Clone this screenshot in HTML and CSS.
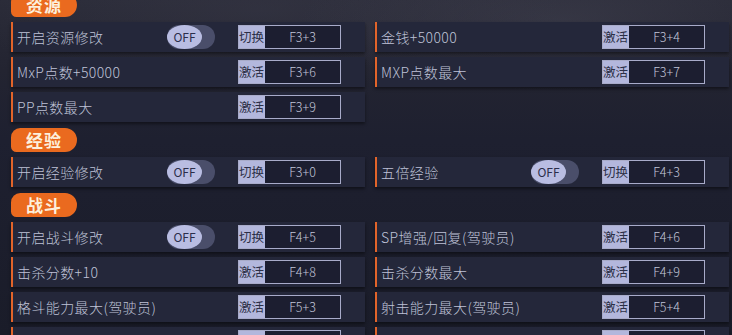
FILE: index.html
```html
<!DOCTYPE html>
<html lang="zh">
<head>
<meta charset="utf-8">
<link rel="stylesheet" href="styles.css">
</head>
<body>
<div class="page">
  <section class="section">
    <div class="tag">资源</div>
    <div class="grid">
      <div class="row"><span class="name">开启资源修改</span><span class="toggle"><span class="knob">OFF</span></span><span class="key"><span class="kl">切换</span><span class="kv">F3+3</span></span></div>
      <div class="row"><span class="name">金钱+50000</span><span class="key"><span class="kl">激活</span><span class="kv">F3+4</span></span></div>
      <div class="row"><span class="name">MxP点数+50000</span><span class="key"><span class="kl">激活</span><span class="kv">F3+6</span></span></div>
      <div class="row"><span class="name">MXP点数最大</span><span class="key"><span class="kl">激活</span><span class="kv">F3+7</span></span></div>
      <div class="row"><span class="name">PP点数最大</span><span class="key"><span class="kl">激活</span><span class="kv">F3+9</span></span></div>
    </div>
  </section>
  <section class="section">
    <div class="tag">经验</div>
    <div class="grid">
      <div class="row"><span class="name">开启经验修改</span><span class="toggle"><span class="knob">OFF</span></span><span class="key"><span class="kl">切换</span><span class="kv">F3+0</span></span></div>
      <div class="row"><span class="name">五倍经验</span><span class="toggle"><span class="knob">OFF</span></span><span class="key"><span class="kl">切换</span><span class="kv">F4+3</span></span></div>
    </div>
  </section>
  <section class="section">
    <div class="tag">战斗</div>
    <div class="grid">
      <div class="row"><span class="name">开启战斗修改</span><span class="toggle"><span class="knob">OFF</span></span><span class="key"><span class="kl">切换</span><span class="kv">F4+5</span></span></div>
      <div class="row"><span class="name">SP增强/回复(驾驶员)</span><span class="key"><span class="kl">激活</span><span class="kv">F4+6</span></span></div>
      <div class="row"><span class="name">击杀分数+10</span><span class="key"><span class="kl">激活</span><span class="kv">F4+8</span></span></div>
      <div class="row"><span class="name">击杀分数最大</span><span class="key"><span class="kl">激活</span><span class="kv">F4+9</span></span></div>
      <div class="row"><span class="name">格斗能力最大(驾驶员)</span><span class="key"><span class="kl">激活</span><span class="kv">F5+3</span></span></div>
      <div class="row"><span class="name">射击能力最大(驾驶员)</span><span class="key"><span class="kl">激活</span><span class="kv">F5+4</span></span></div>
      <div class="row"><span class="name"></span><span class="key"><span class="kl"></span><span class="kv"></span></span></div>
      <div class="row"><span class="name"></span><span class="key"><span class="kl"></span><span class="kv"></span></span></div>
    </div>
  </section>
</div>
</body>
</html>
```

FILE: styles.css
```css
html, body {
  margin: 0;
  padding: 0;
  height: 100%;
  overflow: hidden;
}
body {
  background:
    radial-gradient(ellipse 260px 70px at 560px 20px, rgba(70,70,85,0.45), transparent),
    radial-gradient(ellipse 300px 80px at 260px 10px, rgba(60,60,75,0.4), transparent),
    linear-gradient(180deg, #2a2b38 0px, #232431 70px, #1e2030 140px, #1a1c29 335px);
  font-family: "Noto Sans CJK SC", "Noto Sans", sans-serif;
  color: #c6c9dc;
}
.page {
  margin-top: -7px;
  padding-left: 11px;
  width: 718px;
}
.section {
  margin-bottom: 6px;
}
.tag {
  width: 51px;
  height: 24px;
  padding-left: 15px;
  background: #ea6a1f;
  border-radius: 10px 13px 13px 6px;
  color: #fdf0dc;
  font-weight: bold;
  font-size: 17px;
  line-height: 24px;
  letter-spacing: 1px;
  margin-bottom: 5px;
}
.grid {
  display: grid;
  grid-template-columns: 354px 354px;
  column-gap: 10px;
  row-gap: 5px;
}
.row {
  height: 30px;
  box-sizing: border-box;
  display: flex;
  align-items: center;
  background: #24273a;
  border-left: 2px solid #e2642a;
  padding-left: 4px;
  padding-right: 24px;
  box-shadow: 0 2px 3px rgba(0,0,0,0.45);
}
.name {
  flex: 1;
  font-size: 14px;
  font-weight: 300;
  letter-spacing: 0.4px;
  color: #bfc2d7;
  white-space: nowrap;
}
.toggle {
  width: 48px;
  height: 24px;
  border-radius: 12px;
  background: #4a4e6a;
  margin-right: 23px;
  display: flex;
  align-items: center;
}
.knob {
  width: 35px;
  height: 24px;
  border-radius: 50%;
  background: #b9bde2;
  color: #2b2e4a;
  font-size: 12px;
  line-height: 24px;
  text-align: center;
}
.key {
  width: 103px;
  height: 24px;
  box-sizing: border-box;
  display: flex;
  border: 1px solid #a8abc9;
  background: #1c1e30;
}
.kl {
  width: 26px;
  background: #b3b7dc;
  color: #2c2f47;
  font-size: 12.5px;
  line-height: 22px;
  white-space: nowrap;
  overflow: hidden;
}
.kv {
  flex: 1;
  text-align: center;
  font-size: 12.5px;
  font-weight: 300;
  line-height: 22px;
  color: #c3c6da;
}
```
